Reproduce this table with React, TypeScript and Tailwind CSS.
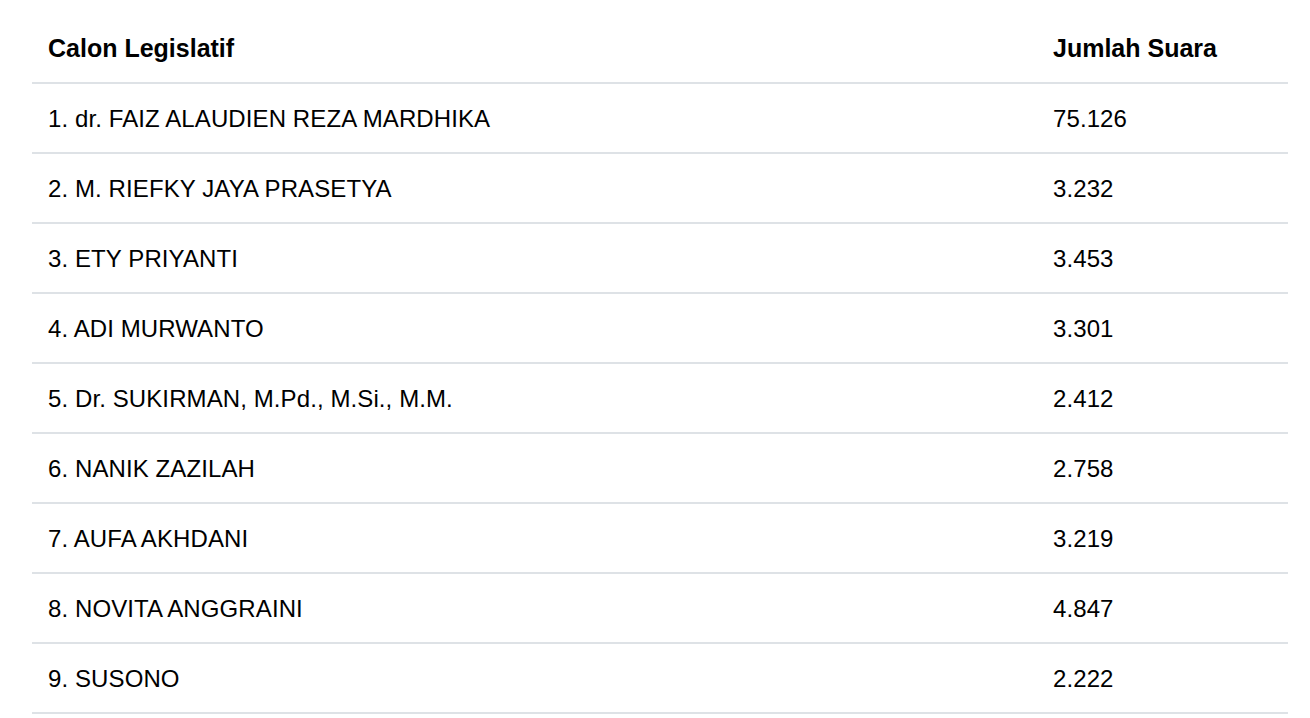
import React from "react";

const rows: [string, string][] = [
  ["1. dr. FAIZ ALAUDIEN REZA MARDHIKA", "75.126"],
  ["2. M. RIEFKY JAYA PRASETYA", "3.232"],
  ["3. ETY PRIYANTI", "3.453"],
  ["4. ADI MURWANTO", "3.301"],
  ["5. Dr. SUKIRMAN, M.Pd., M.Si., M.M.", "2.412"],
  ["6. NANIK ZAZILAH", "2.758"],
  ["7. AUFA AKHDANI", "3.219"],
  ["8. NOVITA ANGGRAINI", "4.847"],
  ["9. SUSONO", "2.222"],
];

export default function App() {
  return (
    <div
      className="w-[1310px] h-[718px] bg-white overflow-hidden px-[32px] pt-[14px] text-black"
      style={{ fontFamily: '"Liberation Sans", Arial, sans-serif' }}
    >
      <div className="w-[1256px]">
        <div className="grid grid-cols-[1005px_1fr] h-[70px] items-center border-b-2 border-[#dee2e6] text-[25px] font-bold">
          <div className="pl-[16px] pt-[1px]">Calon Legislatif</div>
          <div className="pl-[16px] pt-[1px]">Jumlah Suara</div>
        </div>
        {rows.map(([name, votes]) => (
          <div
            key={name}
            className="grid grid-cols-[1005px_1fr] h-[70px] items-center border-b-2 border-[#dee2e6] text-[24px] tracking-[0.1px]"
          >
            <div className="pl-[16px] pt-[1px]">{name}</div>
            <div className="pl-[16px] pt-[1px]">{votes}</div>
          </div>
        ))}
      </div>
    </div>
  );
}
